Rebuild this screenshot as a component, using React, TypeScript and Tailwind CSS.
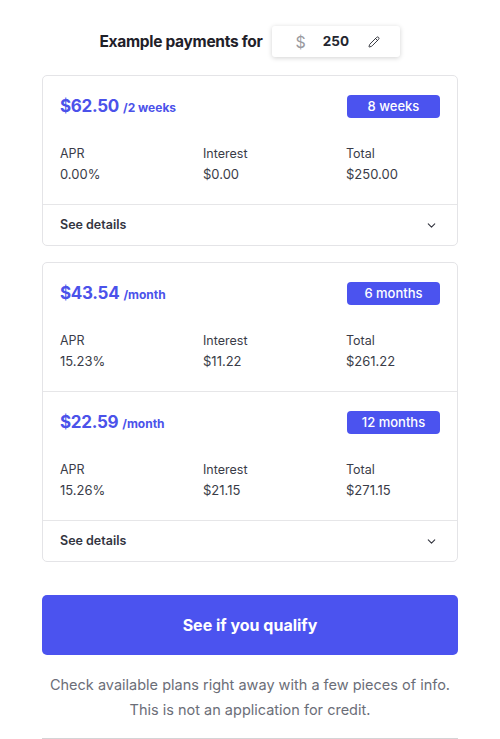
import React from "react";
import {ChevronDown, Pencil} from "lucide-react";

const plans = [
    {id: 1, group: 1, price: "$62.50", per: "/2 weeks", term: "8 weeks", apr: "0.00%", interest: "$0.00", total: "$250.00"},
    {id: 2, group: 2, price: "$43.54", per: "/month", term: "6 months", apr: "15.23%", interest: "$11.22", total: "$261.22"},
    {id: 3, group: 2, price: "$22.59", per: "/month", term: "12 months", apr: "15.26%", interest: "$21.15", total: "$271.15"},
];

const PlanRow = ({plan}) => (
    <div className="px-[17px] pt-[19px] pb-[19px] border-b border-[#e6e6e8]">
        <div className="flex items-center justify-between h-[23px]">
            <div className="flex items-baseline text-[#4b52ea] font-bold">
                <span className="text-[17px] tracking-[-0.3px]">{plan.price}</span>
                <span className="text-[12px] ml-[4px]">{plan.per}</span>
            </div>
            <span className="w-[93px] h-[23px] rounded-[4px] bg-[#4b53ef] text-white text-[13px] font-medium flex items-center justify-center">
                {plan.term}
            </span>
        </div>
        <div className="grid grid-cols-[143px_143px_1fr] mt-[25px] text-[#3a3c48]">
            {[["APR", plan.apr], ["Interest", plan.interest], ["Total", plan.total]].map(([label, value]) => (
                <div key={label} className="flex flex-col">
                    <span className="text-[12.5px] leading-[21px]">{label}</span>
                    <span className="text-[13px] leading-[21px]">{value}</span>
                </div>
            ))}
        </div>
    </div>
);

const SeeDetails = () => (
    <div className="flex items-center justify-between h-[40px] pl-[17px] pr-[19px]">
        <span className="text-[12.5px] font-semibold text-[#33353f]">See details</span>
        <ChevronDown size={13} strokeWidth={2} className="text-[#33353f]"/>
    </div>
);

const App = () => {
    return (
        <div className="bg-white w-[500px] min-h-[739px] px-[42px] pt-[26px] font-['Inter',sans-serif]">
            <div className="flex items-center justify-center gap-[10px]">
                <h2 className="text-[15.5px] font-bold text-[#1f2129] tracking-[-0.3px]">Example payments for</h2>
                <div className="w-[128px] h-[31px] bg-white rounded-[3px] shadow-[0_1px_5px_rgba(0,0,0,0.18)] flex items-center pl-[23px] pr-[20px]">
                    <span className="text-[16px] text-[#9a9a9f]">$</span>
                    <span className="ml-[17px] text-[13.5px] font-bold text-[#24262f]">250</span>
                    <Pencil size={12} strokeWidth={1.8} className="ml-auto text-[#24262f]"/>
                </div>
            </div>

            <div className="mt-[18px] border border-[#e4e4e7] rounded-[5px]">
                <PlanRow plan={plans[0]}/>
                <SeeDetails/>
            </div>

            <div className="mt-[16px] border border-[#e4e4e7] rounded-[5px]">
                {plans.filter(p => p.group === 2).map(p => <PlanRow key={p.id} plan={p}/>)}
                <SeeDetails/>
            </div>

            <button
                type="button"
                className="mt-[33px] w-full h-[60px] rounded-[5px] bg-[#4b53ef] text-white text-[16px] font-bold">
                See if you qualify
            </button>

            <p className="mt-[17px] text-center text-[14.5px] leading-[25px] text-[#6b6e78]">
                Check available plans right away with a few pieces of info.
                <br/>
                This is not an application for credit.
            </p>

            <div className="mt-[16px] border-b border-[#d4d4d6]"/>
        </div>
    );
};

export default App;
